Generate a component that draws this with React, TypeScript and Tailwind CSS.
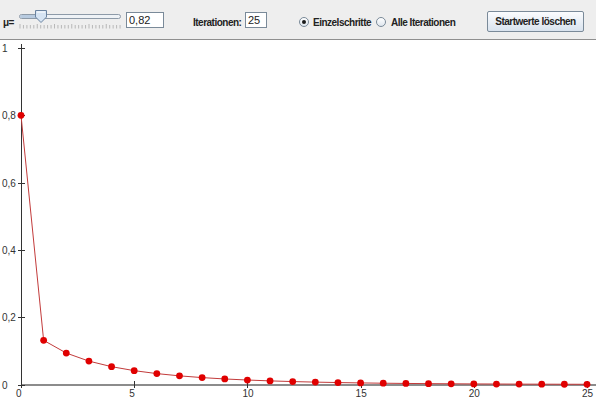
import React from "react";

const MU = 0.82;
const X0 = 0.8;
const STEPS = 25;

const px = (n: number) => 21 + n * 22.64;
const py = (v: number) => 384.5 - v * 336.5;

const values = (() => {
  const out = [X0];
  for (let i = 1; i <= STEPS; i++) {
    const x = out[i - 1];
    out.push(MU * x * (1 - x));
  }
  return out;
})();

const Slider = () => {
  const ticks = Array.from({ length: 30 }, (_, i) => 3 + i * 3.45);
  return (
    <svg width={108} height={39} className="block shrink-0">
      <rect x={2.5} y={14.5} width={101} height={4} rx={2} fill="#eef2f6" stroke="#8d9aa8" />
      <rect x={3} y={15} width={20} height={3} rx={1.5} fill="#b8cbe0" />
      {ticks.map((t, i) => (
        <line key={i} x1={t} x2={t} y1={i % 5 === 0 ? 24 : 25} y2={28.5} stroke="#a9a9a9" strokeWidth={0.8} />
      ))}
      <path d="M18.5 10.5 H29.5 V17 L24 22.5 L18.5 17 Z" fill="#d6e4f3" stroke="#6a83a0" />
      <path d="M20 12 H28" stroke="#ffffff" />
    </svg>
  );
};

const Radio = ({ checked }: { checked?: boolean }) => (
  <span className="mt-[17px] flex h-[10px] w-[10px] shrink-0 items-center justify-center rounded-full border border-[#7a8a99] bg-gradient-to-b from-[#ffffff] to-[#dfe6ee]">
    {checked && <span className="h-[4px] w-[4px] rounded-full bg-[#1a1a1a]" />}
  </span>
);

const Chart = () => {
  const pts = values.map((v, n) => [px(n), py(v)] as const);
  const yTicks = [0, 0.2, 0.4, 0.6, 0.8, 1];
  const xTicks = [0, 5, 10, 15, 20, 25];
  return (
    <svg width={596} height={358} viewBox="0 40 596 358" className="block" style={{ fontFamily: '"Liberation Sans", Arial, sans-serif' }}>
      <line x1={21} x2={596} y1={385} y2={385} stroke="#8c8c8c" strokeWidth={2} />
      <line x1={21.5} x2={21.5} y1={44} y2={388} stroke="#333333" />
      {yTicks.map((t) => (
        <g key={t}>
          <line x1={18} x2={25} y1={Math.round(py(t)) + 0.5} y2={Math.round(py(t)) + 0.5} stroke="#333333" />
          <text x={2} y={py(t) + 4} fontSize={10} fill="#333333">
            {t === 0 ? "0" : t === 1 ? "1" : t.toFixed(1).replace(".", ",")}
          </text>
        </g>
      ))}
      {xTicks.map((t) => (
        <g key={t}>
          <line x1={Math.round(px(t)) + 0.5} x2={Math.round(px(t)) + 0.5} y1={381} y2={388} stroke="#333333" />
          <text x={px(t) - 5} y={397} fontSize={10} fill="#333333">
            {t}
          </text>
        </g>
      ))}
      <polyline points={pts.map(([x, y]) => `${x},${y}`).join(" ")} fill="none" stroke="#c23b3b" strokeWidth={1} />
      {pts.map(([x, y], i) => (
        <circle key={i} cx={x} cy={y} r={3.4} fill="#e00000" />
      ))}
    </svg>
  );
};

export default function App() {
  const text = "whitespace-nowrap text-[10px] font-bold leading-[13px] tracking-[-0.5px] text-[#222222]";
  return (
    <div className="h-[398px] w-[596px] overflow-hidden bg-white" style={{ fontFamily: '"Liberation Sans", Arial, sans-serif' }}>
      <div className="flex h-[40px] items-start border-b border-[#8f8f8f] bg-[#eeeeee]">
        <span className={`ml-[3px] mt-[16px] w-[14px] shrink-0 ${text}`}>μ=</span>
        <Slider />
        <div className="ml-[1px] mt-[12px] flex h-[16px] w-[38px] shrink-0 items-center border border-[#7a8a99] bg-white pl-[2px] text-[11px] text-[#222222]">
          0,82
        </div>
        <span className={`ml-[29px] mt-[16px] w-[51px] shrink-0 ${text}`}>Iterationen:</span>
        <div className="ml-[1px] mt-[12px] flex h-[16px] w-[22px] shrink-0 items-center border border-[#7a8a99] bg-white pl-[2px] text-[11px] text-[#222222]">
          25
        </div>
        <span className="ml-[32px] flex shrink-0">
          <Radio checked />
        </span>
        <span className={`ml-[4px] mt-[16px] w-[58px] shrink-0 ${text}`}>Einzelschritte</span>
        <span className="ml-[5px] flex shrink-0">
          <Radio />
        </span>
        <span className={`ml-[5px] mt-[16px] w-[63px] shrink-0 ${text}`}>Alle Iterationen</span>
        <button className={`ml-[33px] mt-[11px] flex h-[21px] w-[97px] shrink-0 items-center justify-center rounded-[2px] border border-[#7a8a99] bg-gradient-to-b from-[#fbfcfe] to-[#d9e3ee] ${text}`}>
          Startwerte löschen
        </button>
      </div>
      <Chart />
    </div>
  );
}
